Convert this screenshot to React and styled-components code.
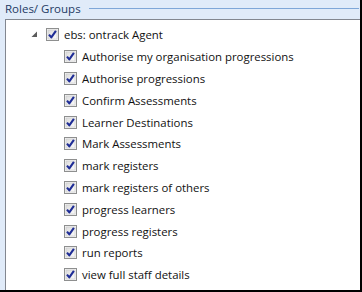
import React from "react";
import styled, { createGlobalStyle } from "styled-components";

const Global = createGlobalStyle`
  html, body {
    margin: 0;
    padding: 0;
    background: #ffffff;
  }
  * {
    box-sizing: border-box;
  }
`;

const Frame = styled.div`
  width: 362px;
  height: 292px;
  display: flex;
  flex-direction: column;
  background: #e0ebf9;
  border-right: 2px solid #000;
  border-bottom: 2px solid #000;
  padding-left: 5px;
  font-family: "Open Sans", "Noto Sans", sans-serif;
`;

const Header = styled.div`
  height: 19px;
  display: flex;
  align-items: center;
`;

const Title = styled.div`
  font-size: 11.5px;
  color: #1e3a64;
  line-height: 19px;
  margin-top: -2px;
`;

const Rule = styled.div`
  flex: 1;
  height: 1px;
  background: #7fa7d8;
  margin: 0 1px 2px 8px;
`;

const Panel = styled.div`
  flex: 1;
  background: #fff;
  border-top: 1px solid #828790;
  border-left: 1px solid #828790;
  padding: 4px 0 0 25px;
`;

const Row = styled.div`
  height: 21.8px;
  display: flex;
  align-items: center;
  padding-left: ${(p) => p.indent}px;
  font-size: 11.4px;
  color: #111;
`;

const Expander = styled.span`
  width: 15px;
  display: flex;
  align-items: center;
`;

const Label = styled.span`
  margin-left: 5px;
  white-space: nowrap;
`;

const Check = () => (
  <svg width="13" height="13" viewBox="0 0 13 13">
    <defs>
      <linearGradient id="cbg" x1="0" y1="0" x2="1" y2="1">
        <stop offset="0" stopColor="#dcdcdc" />
        <stop offset="1" stopColor="#fbfbfb" />
      </linearGradient>
    </defs>
    <rect x="0.5" y="0.5" width="12" height="12" fill="#f4f4f4" stroke="#8e8f8f" />
    <rect x="2" y="2" width="9" height="9" fill="url(#cbg)" stroke="#c8c8c8" strokeWidth="0.6" />
    <path d="M3 6.6 L5.3 9.4 L9.9 2.8" fill="none" stroke="#1f2d96" strokeWidth="2.1" strokeLinejoin="round" />
  </svg>
);

const Triangle = () => (
  <svg width="7" height="7" viewBox="0 0 7 7">
    <path d="M6 0.5 L6 6 L0.5 6 Z" fill="#5b5b5b" />
  </svg>
);

const items = [
  "Authorise my organisation progressions",
  "Authorise progressions",
  "Confirm Assessments",
  "Learner Destinations",
  "Mark Assessments",
  "mark registers",
  "mark registers of others",
  "progress learners",
  "progress registers",
  "run reports",
  "view full staff details",
];

export default function App() {
  return (
    <>
      <Global />
      <Frame>
        <Header>
          <Title>Roles/ Groups</Title>
          <Rule />
        </Header>
        <Panel>
          <Row indent={0}>
            <Expander>
              <Triangle />
            </Expander>
            <Check />
            <Label>ebs: ontrack Agent</Label>
          </Row>
          {items.map((t) => (
            <Row key={t} indent={33}>
              <Check />
              <Label>{t}</Label>
            </Row>
          ))}
        </Panel>
      </Frame>
    </>
  );
}
